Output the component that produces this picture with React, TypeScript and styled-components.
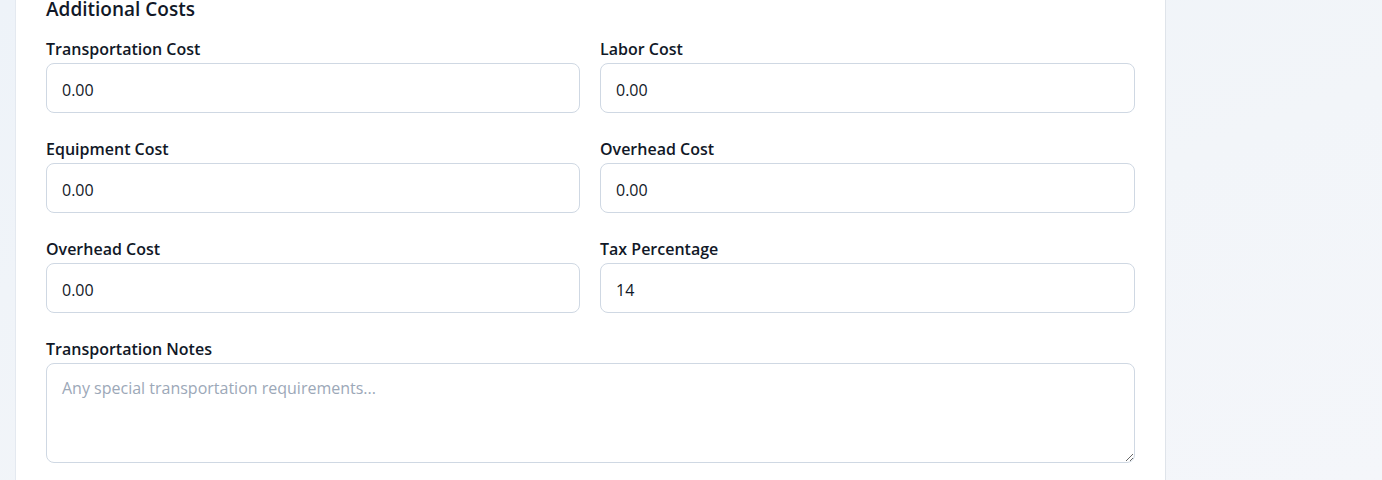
import React from "react";
import styled, { createGlobalStyle } from "styled-components";

const Global = createGlobalStyle`
  html, body { margin: 0; padding: 0; }
  body {
    font-family: "Open Sans", "Noto Sans", sans-serif;
    background: linear-gradient(160deg, #eef3f9 0%, #f2f5f9 60%, #f4f6fa 100%);
    height: 480px;
    overflow: hidden;
  }
`;

const Page = styled.div`
  display: flex;
  height: 480px;
  padding-left: 15px;
`;

const Card = styled.section`
  width: 1151px;
  box-sizing: border-box;
  background: #ffffff;
  border-left: 1px solid #e4e9f0;
  border-right: 1px solid #dfe4ea;
  padding: 0 30px 0 30px;
`;

const Heading = styled.h2`
  margin: -5px 0 0 0;
  font-size: 19px;
  line-height: 28px;
  font-weight: 600;
  color: #111827;
`;

const Grid = styled.div`
  display: grid;
  grid-template-columns: 534px 1fr;
  column-gap: 20px;
  row-gap: 25px;
  margin-top: 15px;
`;

const Field = styled.div<{ $full?: boolean }>`
  display: flex;
  flex-direction: column;
  gap: 3px;
  grid-column: ${(p) => (p.$full ? "1 / -1" : "auto")};
`;

const Label = styled.label`
  font-size: 16px;
  line-height: 22px;
  font-weight: 600;
  color: #111827;
`;

const Input = styled.input`
  box-sizing: border-box;
  height: 50px;
  width: 100%;
  padding: 3px 15px 0 15px;
  border: 1px solid #cfd8e3;
  border-radius: 8px;
  font-family: inherit;
  font-size: 16px;
  color: #111827;
  background: #fff;
  outline: none;
`;

const TextArea = styled.textarea`
  box-sizing: border-box;
  height: 100px;
  width: 100%;
  padding: 12px 15px;
  border: 1px solid #cfd8e3;
  border-radius: 8px;
  font-family: inherit;
  font-size: 16px;
  line-height: 24px;
  color: #111827;
  background: #fff;
  outline: none;
  resize: vertical;
  &::placeholder { color: #9ca8b8; }
`;

const fields: { label: string; value: string }[] = [
  { label: "Transportation Cost", value: "0.00" },
  { label: "Labor Cost", value: "0.00" },
  { label: "Equipment Cost", value: "0.00" },
  { label: "Overhead Cost", value: "0.00" },
  { label: "Overhead Cost", value: "0.00" },
  { label: "Tax Percentage", value: "14" },
];

export default function App() {
  return (
    <>
      <Global />
      <Page>
        <Card>
          <Heading>Additional Costs</Heading>
          <Grid>
            {fields.map((f, i) => (
              <Field key={i}>
                <Label>{f.label}</Label>
                <Input defaultValue={f.value} />
              </Field>
            ))}
            <Field $full>
              <Label>Transportation Notes</Label>
              <TextArea placeholder="Any special transportation requirements..." />
            </Field>
          </Grid>
        </Card>
      </Page>
    </>
  );
}
